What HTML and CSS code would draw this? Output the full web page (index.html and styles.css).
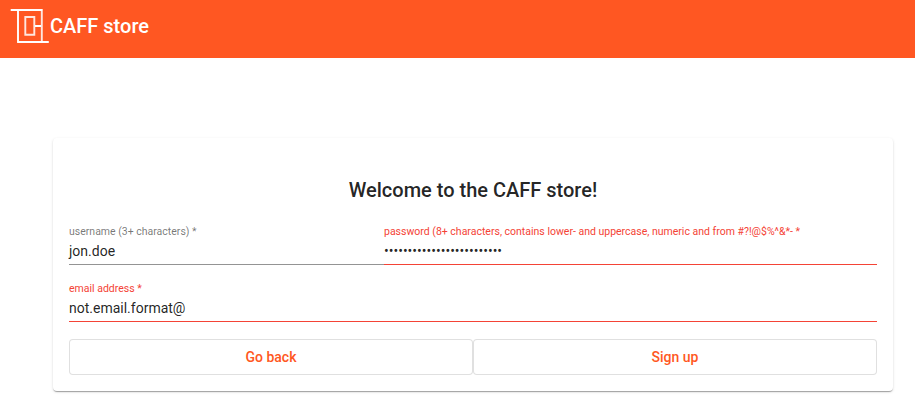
FILE: index.html
```html
<!DOCTYPE html>
<html lang="en">
<head>
<meta charset="utf-8">
<title>CAFF store</title>
<link rel="stylesheet" href="styles.css">
</head>
<body>
<header class="toolbar">
  <svg class="logo" width="40" height="36" viewBox="0 0 40 36" fill="none" stroke="#fff" stroke-width="1.9"><path d="M.7 2H32.7M8 2V34M7.1 34H38.8M25 18H31"/><path d="M31.8 2.9V33.1M15.3 9H24.3V26.8H15.3Z" stroke-opacity=".85"/></svg>
  <span class="brand">CAFF store</span>
</header>
<main class="card">
  <h1 class="title">Welcome to the CAFF store!</h1>
  <form class="form">
    <div class="row">
      <div class="field username"><label class="label">username (3+ characters) *</label><div class="value">jon.doe</div></div>
      <div class="field password invalid"><label class="label">password (8+ characters, contains lower- and uppercase, numeric and from #?!@$%^&amp;*- *</label><div class="value dots">•••••••••••••••••••••••••</div></div>
    </div>
    <div class="field email invalid"><label class="label">email address *</label><div class="value">not.email.format@</div></div>
    <div class="actions"><button type="button" class="button">Go back</button><button type="button" class="button">Sign up</button></div>
  </form>
</main>
</body>
</html>
```
FILE: styles.css
```css
* { box-sizing: border-box; }
body { margin: 0; min-height: 412px; background: #fff; color: rgba(0,0,0,.87); font-family: Roboto, sans-serif; }
.toolbar { height: 58px; padding: 8px 10px; display: flex; align-items: flex-start; background: #ff5722; color: #fff; }
.logo { flex: none; }
.brand { font-size: 20px; line-height: 36px; font-weight: 500; }
.card { width: 840px; height: 253px; margin: 80px 0 0 53px; padding: 38px 16px 16px; border-radius: 4px; background: #fff; box-shadow: 0 2px 1px -1px rgba(0,0,0,.2), 0 1px 1px rgba(0,0,0,.14), 0 1px 3px rgba(0,0,0,.12); }
.title { margin: 0; font-size: 20px; line-height: 28px; font-weight: 500; text-align: center; }
.form { margin-top: 20px; }
.row { display: flex; }
.field { height: 41px; padding-top: 1px; border-bottom: 1px solid #949494; }
.username { width: 315px; }
.password { flex: 1; }
.label { display: block; font-size: 10.5px; line-height: 14px; color: rgba(0,0,0,.54); white-space: nowrap; }
.value { font-size: 14px; line-height: 16px; margin-top: 4px; }
.invalid { border-color: #f44336; }
.invalid .label { color: #f44336; }
.email { margin-top: 16px; }
.actions { display: flex; margin-top: 17px; }
.button { flex: 1; height: 36px; padding: 0; border: 1px solid rgba(0,0,0,.12); border-radius: 4px; background: #fff; color: #ff5722; font: 500 14px/34px Roboto, sans-serif; }
```
